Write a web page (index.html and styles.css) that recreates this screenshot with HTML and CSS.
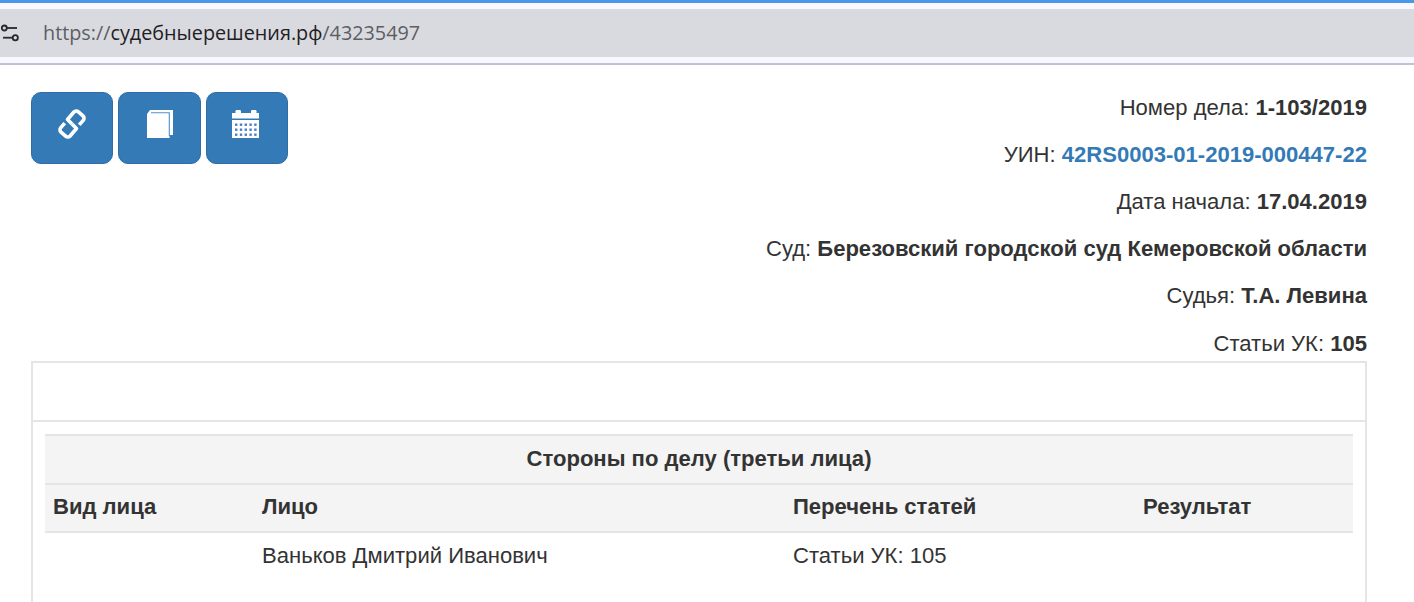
FILE: index.html
```html
<!DOCTYPE html>
<html lang="ru">
<head>
<meta charset="utf-8">
<title>Дело</title>
<link rel="stylesheet" href="styles.css">
</head>
<body>
<header class="browser">
  <div class="address">
    <svg class="tune" width="20" height="20" viewBox="0 0 20 20" fill="none" stroke="#26282c" stroke-width="1.8"><circle cx="4.300" cy="5" r="2.500"/><path d="M7 5h10"/><circle cx="15.300" cy="14.700" r="2.600"/><path d="M3 14.700h9.500"/></svg>
    <span class="url"><span class="dim">https://</span>судебныерешения.рф<span class="dim">/43235497</span></span>
  </div>
</header>
<main class="page">
  <section class="top">
    <div class="actions">
      <a class="btn btn-link">
        <svg width="30" height="32" viewBox="0 0 28 30" fill="none" stroke="#fff" stroke-width="3.400" stroke-linecap="butt" stroke-linejoin="round"><path d="M14 15 9.800 10.800l6-7a3 3 0 0 1 4.200-.2l4.300 3.800a3 3 0 0 1 .2 4.200l-3.700 4.200"/><path d="M14 15l4.200 4.200-6 7a3 3 0 0 1-4.200.2L3.700 22.600a3 3 0 0 1-.2-4.200l3.700-4.200"/></svg>
      </a>
      <a class="btn btn-book">
        <svg width="27" height="28" viewBox="0 0 27 28"><path d="M1 4 4 0h23v25h-3.500v3H1z" fill="#fff"/><path d="M5 2.700h18.300V26" fill="none" stroke="#4f8fd0" stroke-width="1.100"/></svg>
      </a>
      <a class="btn btn-cal">
        <svg width="27" height="28" viewBox="0 0 27 28" fill="#fff"><rect x="3.500" y="0" width="5.500" height="5" rx="1.200"/><rect x="19" y="0" width="5.500" height="5" rx="1.200"/><rect x="0" y="3" width="27" height="5.500"/><rect x="0" y="10" width="27" height="18"/><g fill="#4d7dc4"><rect x="3" y="13.500" width="2.400" height="2.400"/><rect x="7.800" y="13.500" width="2.400" height="2.400"/><rect x="12.600" y="13.500" width="2.400" height="2.400"/><rect x="17.400" y="13.500" width="2.400" height="2.400"/><rect x="22.200" y="13.500" width="2.400" height="2.400"/><rect x="3" y="18.500" width="2.400" height="2.400"/><rect x="7.800" y="18.500" width="2.400" height="2.400"/><rect x="12.600" y="18.500" width="2.400" height="2.400"/><rect x="17.400" y="18.500" width="2.400" height="2.400"/><rect x="22.200" y="18.500" width="2.400" height="2.400"/><rect x="3" y="23.500" width="2.400" height="2.400"/><rect x="7.800" y="23.500" width="2.400" height="2.400"/><rect x="12.600" y="23.500" width="2.400" height="2.400"/><rect x="17.400" y="23.500" width="2.400" height="2.400"/><rect x="22.200" y="23.500" width="2.400" height="2.400"/></g></svg>
      </a>
    </div>
    <div class="facts">
      <p>Номер дела: <b>1-103/2019</b></p>
      <p>УИН: <a class="uin"><b>42RS0003-01-2019-000447-22</b></a></p>
      <p>Дата начала: <b>17.04.2019</b></p>
      <p>Суд: <b>Березовский городской суд Кемеровской области</b></p>
      <p>Судья: <b>Т.А. Левина</b></p>
      <p>Статьи УК: <b>105</b></p>
    </div>
  </section>
  <section class="panel">
    <div class="panel-head"></div>
    <div class="panel-body">
      <table class="parties">
        <colgroup><col class="c1"><col class="c2"><col class="c3"><col class="c4"></colgroup>
        <thead>
          <tr class="title"><th colspan="4">Стороны по делу (третьи лица)</th></tr>
          <tr class="cols"><th>Вид лица</th><th>Лицо</th><th>Перечень статей</th><th>Результат</th></tr>
        </thead>
        <tbody>
          <tr><td></td><td>Ваньков Дмитрий Иванович</td><td>Статьи УК: 105</td><td></td></tr>
        </tbody>
      </table>
    </div>
  </section>
</main>
</body>
</html>
```
FILE: styles.css
```css
* { box-sizing: border-box; }
html, body { margin: 0; height: 602px; overflow: hidden; background: #fff; }
body { font-family: "Liberation Sans", Arial, sans-serif; font-size: 22.05px; line-height: 31.43px; color: #333; }
.browser { height: 65px; background: #f7f9fe; border-top: 3px solid #4a97e8; border-bottom: 2px solid #c0c1d6; padding-top: 6px; }
.address { height: 48px; background: #d9dae0; display: flex; align-items: center; gap: 23px; overflow: hidden; }
.tune { flex: none; }
.url { font-family: "Open Sans", "Noto Sans", sans-serif; font-size: 19.8px; color: #1f2023; }
.dim { color: #5c5e63; }
.page { padding: 27px 47px 0 31px; }
.top { display: flex; justify-content: space-between; align-items: flex-start; }
.actions { display: flex; gap: 5.5px; }
.btn { width: 81.5px; height: 71.5px; background: #337ab7; border: 1px solid #2e6da4; border-radius: 10px; display: flex; justify-content: center; padding-top: 17px; }
.btn-link { padding-top: 15px; }
.btn-book { width: 82.5px; padding-left: 1px; }
.btn-cal { padding-right: 2px; }
.btn svg { display: block; }
.facts { text-align: right; margin-top: -0.3px; }
.facts p { margin: 0 0 15.75px; }
.facts p:last-child { margin-bottom: 2.3px; }
.uin { color: #337ab7; }
.panel { border: 2px solid #e5e5e5; border-bottom: 0; height: 241px; overflow: hidden; }
.panel-head { height: 59px; border-bottom: 2px solid #e5e5e5; }
.panel-body { padding: 12px 12px 0; }
.parties { width: 100%; border-collapse: collapse; table-layout: fixed; }
.c1 { width: 209px; } .c2 { width: 531px; } .c3 { width: 350px; }
th, td { padding: 7.5px 8px 8px; text-align: left; }
.title th { padding-top: 6.5px; padding-bottom: 9px; }
.cols th { padding-top: 6px; }
thead tr { background: #f4f4f4; }
.title th { text-align: center; border-top: 2px solid #e5e5e5; border-bottom: 2px solid #e5e5e5; }
.cols th { border-bottom: 2px solid #e5e5e5; }
```
